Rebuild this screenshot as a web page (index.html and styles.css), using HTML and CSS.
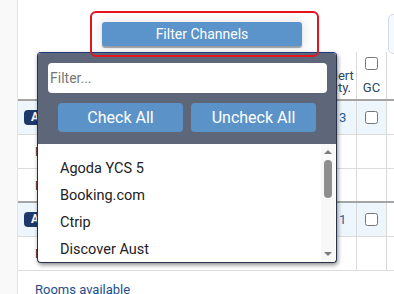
FILE: index.html
```html
<!DOCTYPE html>
<html>
<head>
<meta charset="utf-8">
<link rel="stylesheet" href="styles.css">
</head>
<body>
<div class="app">
  <div class="gutter"></div>
  <div class="main">
    <div class="toolbar">
      <button class="filter-btn">Filter Channels</button>
      <div class="side-btn"></div>
    </div>
    <div class="grid">
      <div class="row head">
        <div class="cell name"></div>
        <div class="cell alert">Alert<br>Qty.</div>
        <div class="cell gc"><input type="checkbox" class="chk"><span>GC</span></div>
        <div class="cell rest"></div>
      </div>
      <div class="row hl">
        <div class="cell name"><span class="badge">A</span></div>
        <div class="cell alert num">3</div>
        <div class="cell gc"><input type="checkbox" class="chk"></div>
        <div class="cell rest"></div>
      </div>
      <div class="row">
        <div class="cell name"><span class="label">Rate plan</span></div>
        <div class="cell alert"></div>
        <div class="cell gc"></div>
        <div class="cell rest"></div>
      </div>
      <div class="row end">
        <div class="cell name"><span class="label">Rate plan</span></div>
        <div class="cell alert"></div>
        <div class="cell gc"></div>
        <div class="cell rest"></div>
      </div>
      <div class="row hl">
        <div class="cell name"><span class="badge">A</span></div>
        <div class="cell alert num">1</div>
        <div class="cell gc"><input type="checkbox" class="chk"></div>
        <div class="cell rest"></div>
      </div>
      <div class="row">
        <div class="cell name"><span class="label">Rate plan</span></div>
        <div class="cell alert"></div>
        <div class="cell gc"></div>
        <div class="cell rest"></div>
      </div>
      <div class="footer">Rooms available</div>
    </div>
  </div>
</div>

<div class="dropdown">
  <div class="dd-head">
    <input class="dd-filter" type="text" placeholder="Filter...">
    <div class="dd-actions">
      <button class="dd-btn">Check All</button>
      <button class="dd-btn">Uncheck All</button>
    </div>
  </div>
  <div class="dd-body">
    <ul class="dd-list">
      <li>Agoda YCS 5</li>
      <li>Booking.com</li>
      <li>Ctrip</li>
      <li>Discover Aust</li>
    </ul>
    <div class="scrollbar">
      <span class="arrow up"></span>
      <span class="thumb"></span>
      <span class="arrow down"></span>
    </div>
  </div>
</div>

<div class="highlight"></div>
</body>
</html>
```

FILE: styles.css
```css
* { box-sizing: border-box; }
html, body { margin: 0; padding: 0; }
body {
  width: 394px;
  height: 294px;
  overflow: hidden;
  font-family: Roboto, "Liberation Sans", sans-serif;
  background: #ffffff;
  color: #222;
}

.app { display: flex; height: 294px; }
.gutter {
  width: 18px;
  flex: none;
  background: #f9f9f9;
  border-right: 1px solid #e4e4e4;
}
.main { flex: 1; min-width: 0; }

.toolbar {
  height: 52px;
  display: flex;
  align-items: flex-start;
}
.filter-btn {
  margin: 22px 0 0 84px;
  width: 200px;
  height: 24px;
  flex: none;
  border: none;
  border-radius: 3px;
  background: #5b93cb;
  color: #fff;
  font-family: Roboto, "Liberation Sans", sans-serif;
  font-size: 14px;
  padding: 0;
  box-shadow: 0 2px 1px rgba(40, 50, 70, 0.45), 0 0 10px 4px rgba(0, 0, 0, 0.07);
}
.side-btn {
  margin: 14px 0 0 86px;
  width: 40px;
  height: 40px;
  flex: none;
  border: 1px solid #cfdbe9;
  border-radius: 5px;
  background: #f6f9fd;
}

.grid { font-size: 13px; }
.row {
  display: grid;
  grid-template-columns: 306px 33px 30px 1fr;
  height: 34px;
  border-bottom: 1px solid #dcdcdc;
}
.row.head {
  height: 49px;
  border-bottom: 2px solid #a4a4a4;
}
.row.end {
  border-bottom: 2px solid #a4a4a4;
}
.cell { min-width: 0; }
.alert, .gc { border-right: 1px solid #d9d9d9; }
.row.hl .name, .row.hl .alert, .row.hl .gc { background: #eef6fd; }

.head .alert {
  display: flex;
  align-items: flex-end;
  justify-content: center;
  text-align: center;
  line-height: 12px;
  padding-bottom: 5px;
  color: #2c4762;
  white-space: nowrap;
}
.head .gc {
  display: flex;
  flex-direction: column;
  align-items: center;
  justify-content: space-between;
  padding: 2px 0 4px;
  color: #2c4762;
  line-height: 14px;
}
.chk { margin: 3px 0 0; width: 13px; height: 13px; }
.row.hl .gc { display: flex; justify-content: center; align-items: center; }
.row.hl .gc .chk { margin: 0; }

.num {
  display: flex;
  align-items: center;
  justify-content: flex-start;
  color: #2a5c9c;
  padding-left: 15px;
}
.name { display: flex; align-items: center; padding-left: 6px; }
.badge {
  display: inline-block;
  height: 15px;
  line-height: 15px;
  padding: 0 8px 0 7px;
  border-radius: 4px;
  background: #1e386c;
  color: #fff;
  font-weight: bold;
  font-size: 12px;
}
.label { padding-left: 11px; color: #333; }

.footer {
  padding: 11px 0 0 17px;
  color: #1d4e8d;
  font-size: 13px;
}

/* dropdown overlay */
.dropdown {
  position: absolute;
  left: 37px;
  top: 52px;
  width: 300px;
  height: 211px;
  border: 1px solid #27324a;
  border-top-color: #20397a;
  border-radius: 4px;
  background: #fff;
  box-shadow: 1px 2px 4px rgba(0, 0, 0, 0.45);
  overflow: hidden;
  display: flex;
  flex-direction: column;
}
.dd-head {
  background: #5d6779;
  padding: 10px 9px 10px 10px;
  height: 91px;
  flex: none;
}
.dd-filter {
  display: block;
  width: 279px;
  height: 30px;
  border: none;
  border-radius: 4px;
  padding: 0 2px;
  font-family: Roboto, "Liberation Sans", sans-serif;
  font-size: 14px;
  color: #222;
  outline: none;
}
.dd-filter::placeholder { color: #777; }
.dd-actions {
  display: flex;
  gap: 8px;
  padding: 10px 0 0 10px;
}
.dd-btn {
  width: 125px;
  height: 29px;
  border: none;
  border-radius: 4px;
  background: #5b93c9;
  color: #fff;
  font-family: Roboto, "Liberation Sans", sans-serif;
  font-size: 16px;
  padding: 0;
}
.dd-body {
  flex: 1;
  display: flex;
  min-height: 0;
}
.dd-list {
  flex: 1;
  margin: 0;
  padding: 11px 0 0 22px;
  list-style: none;
  font-size: 14.5px;
  color: #222;
}
.dd-list li { height: 27px; line-height: 27px; }
.scrollbar {
  width: 14px;
  flex: none;
  margin-right: 1px;
  background: #f8f8f8;
  display: flex;
  flex-direction: column;
  align-items: center;
  padding-top: 6px;
}
.arrow {
  width: 0;
  height: 0;
  border-left: 4px solid transparent;
  border-right: 4px solid transparent;
}
.arrow.up { border-bottom: 4px solid #7c7c7c; }
.arrow.down { border-top: 4px solid #7c7c7c; margin-top: auto; margin-bottom: 6px; }
.thumb {
  width: 8px;
  height: 38px;
  margin-top: 6px;
  border-radius: 4px;
  background: #8f8f8f;
}

/* annotation box */
.highlight {
  position: absolute;
  left: 90px;
  top: 11px;
  width: 229px;
  height: 46px;
  border: 2px solid #e5141c;
  border-radius: 6px;
  pointer-events: none;
}
```
